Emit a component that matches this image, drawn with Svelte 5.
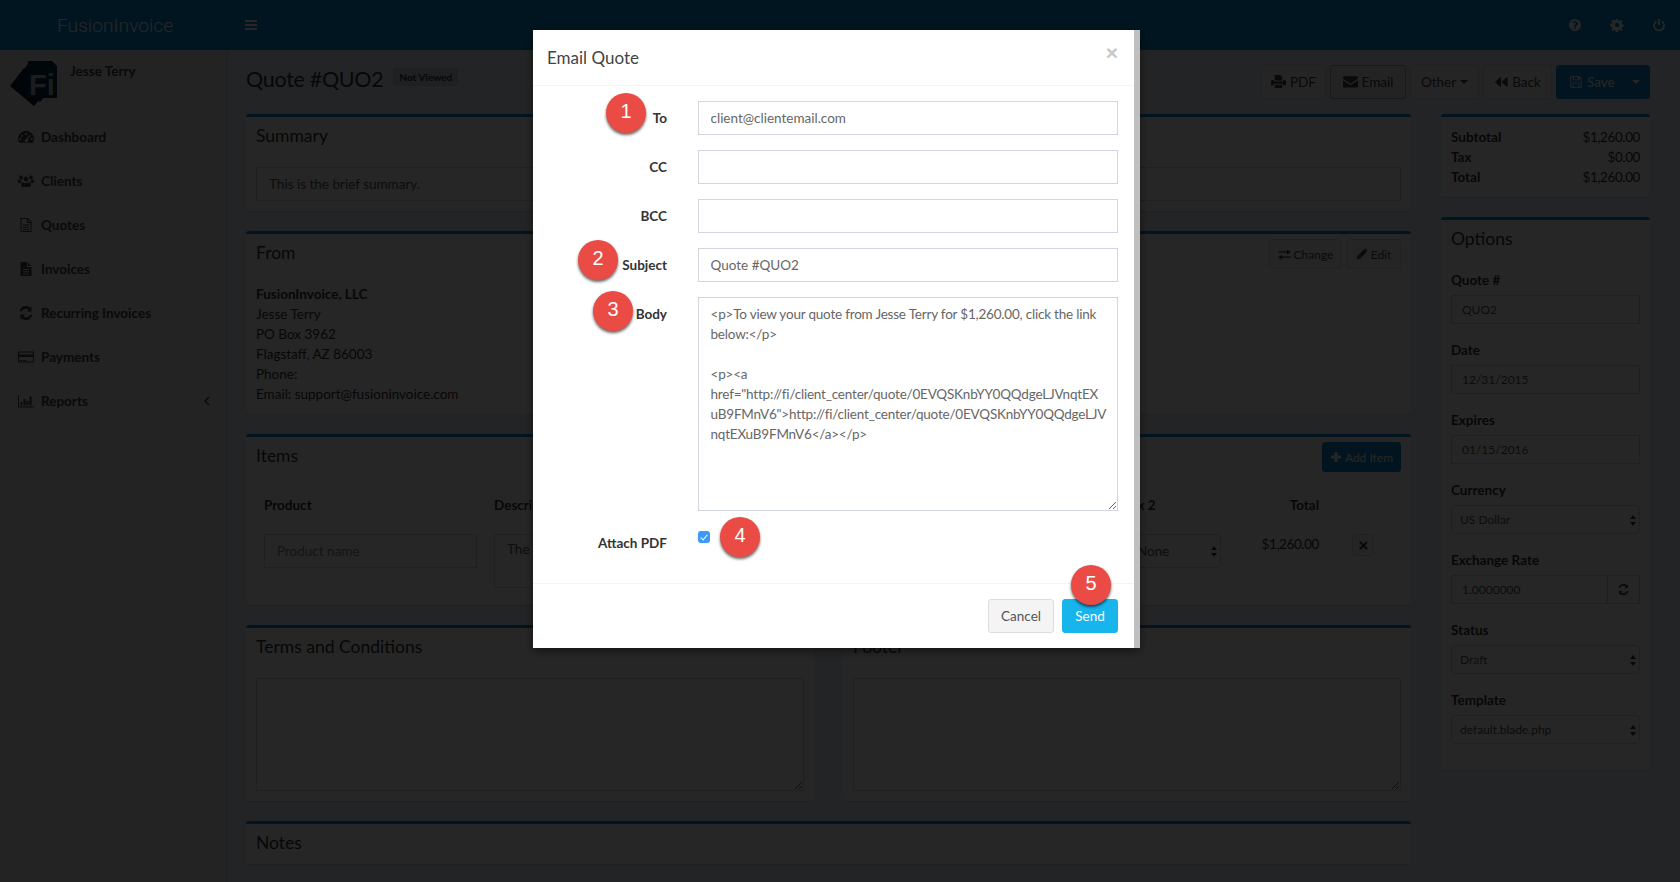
<script lang="ts">
	const icons: Record<string, string> = {
		dashboard: "M8 2a7.800 7.800 0 0 0-8 7.800c0 1.500.4 2.800 1.100 3.900h13.800c.7-1.100 1.100-2.400 1.100-3.900A7.800 7.800 0 0 0 8 2zM4 5.700a1.100 1.100 0 1 1 0 2.200 1.100 1.100 0 0 1 0-2.200zm4-1.700a1.100 1.100 0 1 1 0 2.200A1.100 1.100 0 0 1 8 4zm3.900 1.800.9.500-2.900 4.200a1.700 1.700 0 1 1-1.700-.6zM2.300 9a1.100 1.100 0 1 1 0 2.200 1.100 1.100 0 0 1 0-2.200zm11.400 0a1.100 1.100 0 1 1 0 2.200 1.100 1.100 0 0 1 0-2.200z",
		users: "M8 3.600a2.400 2.400 0 1 1 0 4.800 2.400 2.400 0 0 1 0-4.800zM3 2.600a1.900 1.900 0 1 1 0 3.800 1.900 1.900 0 0 1 0-3.800zm10 0a1.900 1.900 0 1 1 0 3.800 1.900 1.900 0 0 1 0-3.800zM4.200 8.900c.9.800 2.200 1 3.800 1s2.900-.2 3.800-1c.9.500 1.100 2 1.100 3.100 0 1.400-1 2-2.300 2H5.400c-1.300 0-2.300-.6-2.300-2 0-1.100.2-2.600 1.100-3.100zM0 7.500c0-.6.100-1.200.4-1.200.7.600 1.500.900 2.600.900l.9-.1c-.6.700-1.300 1.700-1.500 2.900H1.400C.6 10 0 9.500 0 8.500zm16 0v1c0 1-.6 1.500-1.400 1.500h-1.200c-.2-1.200-.9-2.200-1.500-2.900l.9.100c1.100 0 1.900-.3 2.600-.9.300 0 .6.600.6 1.200z",
		fileo: "M2.500 1h7.200L13.500 4.800V15h-11zM3.500 2v12h9V6H9V2zM10 2.500V5h2.500zM5 7.500h6v1H5zm0 2.300h6v1H5zm0 2.300h6v1H5z",
		file: "M2.500 1H9v5h4.500v9h-11zM10 1.200l3.300 3.800H10zM5 8v1h6V8zm0 2.300v1h6v-1zm0 2.300v1h6v-1z",
		refresh: "M13.600 1.800v4.700H8.900l1.800-1.800A4.400 4.400 0 0 0 3.800 6.300H1.700a6.500 6.500 0 0 1 10.500-3.900zM2.400 14.200V9.500h4.700l-1.800 1.800a4.400 4.400 0 0 0 6.900-1.600h2.100a6.500 6.500 0 0 1-10.500 3.900z",
		card: "M1.300 2.500h13.400c.7 0 1.300.6 1.300 1.300v8.400c0 .7-.6 1.300-1.300 1.300H1.300C.6 13.500 0 12.900 0 12.200V3.800c0-.7.600-1.300 1.300-1.300zM1 5.500h14V3.800a.3.3 0 0 0-.3-.3H1.300a.3.3 0 0 0-.3.300zm0 2.500v4.200c0 .2.100.3.300.3h13.400c.2 0 .3-.1.300-.3V8zm1 3h2v1H2zm3 0h3v1H5z",
		chart: "M0 2h1v11.500h15v1H0zM2.500 9h2v3.500h-2zm3-3h2v6.500h-2zm3 2h2v4.500h-2zm3-4.500h2v9h-2z",
		print: "M4 1h6l2 2v4H4zM1.500 6.500H3V8h10V6.500h1.500c.8 0 1.500.7 1.500 1.500v4h-3v-1.500H3V12H0V8c0-.8.7-1.500 1.500-1.500zM4 11.500h8V15H4z",
		envelope: "M0 4c0-.8.700-1.500 1.500-1.500h13c.8 0 1.500.7 1.500 1.500 0 .5-.4 1-1 1.500L9 9.700c-.6.400-1.400.400-2 0L1 5.500C.4 5 0 4.500 0 4zm0 2.700 6.300 4.300c1 .7 2.400.7 3.400 0L16 6.700v6.300c0 .8-.7 1.500-1.500 1.500h-13C.7 14.500 0 13.800 0 13z",
		backward: "M8 2v12L1 8zM15.500 2v12L8.500 8z",
		save: "M1.500 1.500h10.500l2.500 2.500v10.500h-13zM2.500 2.500v11h1.500V8.500h8v5h1.500V4.400l-1.500-1.500v3.100H4.500V2.500zM5.500 2.500V5h4.500V2.500zM5 9.500v4h6v-4z",
		exchange: "M0 4h11V2l5 3-5 3V5.600H0zM16 10.400H5V8.400l-5 3 5 3v-2.400h11z",
		pencil: "M1 15l1-4.500L10.500 2l3.500 3.500L5.500 14zM11.300 1.200c.5-.5 1.300-.5 1.800 0l1.700 1.700c.5.500.5 1.300 0 1.800l-.3.300-3.500-3.500z",
		plus: "M6 1.500h4v4.500h4.500v4H10v4.500H6V10H1.500V6H6z",
		times: "M3.800 1.800 8 6l4.200-4.200 2 2L10 8l4.200 4.200-2 2L8 10l-4.200 4.200-2-2L6 8 1.800 3.800z",
		question: "M8 1a7 7 0 1 1 0 14A7 7 0 0 1 8 1zM7 10.700v2h2v-2zM8 3.300c-1.500 0-2.700.7-3.300 1.800l1.400 1c.4-.6.900-1 1.700-1 .7 0 1.300.4 1.300 1 0 .5-.4.800-1 1.100-.8.400-1.100 1-1.100 1.800V10h2c0-.5.100-.7.600-1 .9-.6 1.800-1.200 1.800-2.900 0-1.700-1.600-2.800-3.400-2.800z",
		cog: "M6.800 1h2.400l.4 2 1.200.5 1.700-1.100 1.700 1.700-1.100 1.700.5 1.200 2 .4v2.400l-2 .4-.5 1.200 1.100 1.700-1.700 1.700-1.700-1.100-1.200.5-.4 2H6.800l-.4-2-1.200-.5-1.700 1.100-1.700-1.700 1.100-1.700-.5-1.200-2-.4V6.800l2-.4.5-1.200-1.100-1.700 1.700-1.700 1.700 1.100 1.200-.5zM8 5.500a2.500 2.500 0 1 0 0 5 2.500 2.500 0 0 0 0-5z",
		power: "M7 1h2v7H7zM4.600 2.800l1 1.700a4.700 4.700 0 1 0 4.800 0l1-1.700a6.700 6.700 0 1 1-6.800 0z",
	};

	const nav = [
		{ label: "Dashboard", icon: "dashboard" },
		{ label: "Clients", icon: "users" },
		{ label: "Quotes", icon: "fileo" },
		{ label: "Invoices", icon: "file" },
		{ label: "Recurring Invoices", icon: "refresh" },
		{ label: "Payments", icon: "card" },
		{ label: "Reports", icon: "chart" },
	];

	const totals = [
		["Subtotal", "$1,260.00"],
		["Tax", "$0.00"],
		["Total", "$1,260.00"],
	];

	const address = ["Jesse Terry", "PO Box 3962", "Flagstaff, AZ 86003", "Phone:", "Email: support@fusioninvoice.com"];

	const body = `<p>To view your quote from Jesse Terry for $1,260.00, click the link
below:</p>

<p><a
href="http://fi/client_center/quote/0EVQSKnbYY0QQdgeLJVnqtEX
uB9FMnV6">http://fi/client_center/quote/0EVQSKnbYY0QQdgeLJV
nqtEXuB9FMnV6</a></p>`;
</script>

{#snippet icon(name: string, size = 16)}
	<svg class="icon" width={size} height={size} viewBox="0 0 16 16" fill="currentColor" aria-hidden="true">
		<path d={icons[name]} fill-rule="evenodd" />
	</svg>
{/snippet}

{#snippet pickField(label: string, value: string)}
	<div class="side-field">
		<span class="side-label">{label}</span>
		<div class="select-wrap">
			<select class="select side-select"><option>{value}</option></select>
			<span class="updown"></span>
		</div>
	</div>
{/snippet}

{#snippet textField(label: string, value: string)}
	<div class="side-field">
		<span class="side-label">{label}</span>
		<input class="input side-input" {value} />
	</div>
{/snippet}

<div class="page">
	<header class="topbar">
		<div class="brand">FusionInvoice</div>
		<div class="burger"><span></span><span></span><span></span></div>
		<div class="top-icons">
			{@render icon("question", 14)}
			{@render icon("cog", 14)}
			{@render icon("power", 14)}
		</div>
	</header>

	<div class="shell">
		<aside class="sidebar">
			<div class="user">
				<svg class="logo" width="48" height="48" viewBox="0 0 48 48">
					<polygon points="0,26 14,8 38,30 24,46" fill="#011b2b" />
					<polygon points="5,22 18,4 42,28 30,42" fill="#012337" />
					<polygon points="18,1 42,1 47,6 47,38 16,38" fill="#022e4a" />
					<text x="19" y="35" class="logo-text">Fi</text>
				</svg>
				<span class="user-name">Jesse Terry</span>
			</div>
			<nav>
				{#each nav as item}
					<div class="nav-item">
						<span class="nav-icon">{@render icon(item.icon, 16)}</span>
						<span>{item.label}</span>
						{#if item.label === "Reports"}
							<svg class="chev" width="8" height="10" viewBox="0 0 8 10"><path d="M6 1 2 5l4 4" fill="none" stroke="currentColor" stroke-width="1.500" /></svg>
						{/if}
					</div>
				{/each}
			</nav>
		</aside>

		<main class="main">
			<div class="title-row">
				<h1>Quote #QUO2</h1>
				<span class="status">Not Viewed</span>
				<div class="toolbar">
					<button class="btn w65">{@render icon("print", 15)} PDF</button>
					<button class="btn w76 active">{@render icon("envelope", 15)} Email</button>
					<button class="btn w69">Other <span class="caret"></span></button>
					<button class="btn w69">{@render icon("backward", 14)} Back</button>
					<div class="btn primary save">
						<span class="save-label">{@render icon("save", 14)} Save</span>
						<span class="caret"></span>
					</div>
				</div>
			</div>

			<div class="columns">
				<div class="left-col">
					<section class="box">
						<div class="box-head"><h3>Summary</h3></div>
						<div class="box-body"><input class="input" value="This is the brief summary." /></div>
					</section>

					<section class="box">
						<div class="box-head">
							<h3>From</h3>
							<div class="head-actions">
								<button class="btn small w73">{@render icon("exchange", 13)} Change</button>
								<button class="btn small w55">{@render icon("pencil", 12)} Edit</button>
							</div>
						</div>
						<div class="box-body address">
							<strong>FusionInvoice, LLC</strong>
							{#each address as line}
								<div>{line}</div>
							{/each}
						</div>
					</section>

					<section class="box">
						<div class="box-head">
							<h3>Items</h3>
							<div class="head-actions"><button class="btn small primary add">{@render icon("plus", 12)} Add Item</button></div>
						</div>
						<div class="items">
							<strong>Product</strong>
							<strong>Description</strong>
							<strong>Tax 2</strong>
							<strong class="right">Total</strong>
							<span></span>
							<input class="input" placeholder="Product name" />
							<textarea class="input desc" readonly>The</textarea>
							<div class="select-wrap top">
								<select class="select tax"><option>None</option></select>
								<span class="updown"></span>
							</div>
							<span class="right amount">$1,260.00</span>
							<button class="del">{@render icon("times", 11)}</button>
						</div>
					</section>

					<div class="two-up">
						<section class="box">
							<div class="box-head"><h3>Terms and Conditions</h3></div>
							<div class="box-body"><textarea class="input notes" readonly></textarea></div>
						</section>
						<section class="box">
							<div class="box-head"><h3>Footer</h3></div>
							<div class="box-body"><textarea class="input notes" readonly></textarea></div>
						</section>
					</div>

					<section class="box">
						<div class="box-head"><h3>Notes</h3></div>
					</section>
				</div>

				<div class="right-col">
					<section class="box totals">
						{#each totals as row}
							<div class="total-row"><strong>{row[0]}</strong><span class="money">{row[1]}</span></div>
						{/each}
					</section>
					<section class="box options">
						<div class="box-head"><h3>Options</h3></div>
						{@render textField("Quote #", "QUO2")}
						{@render textField("Date", "12/31/2015")}
						{@render textField("Expires", "01/15/2016")}
						{@render pickField("Currency", "US Dollar")}
						<div class="side-field">
							<span class="side-label">Exchange Rate</span>
							<div class="rate">
								<input class="input side-input" value="1.0000000" />
								<span class="addon">{@render icon("refresh", 13)}</span>
							</div>
						</div>
						{@render pickField("Status", "Draft")}
						{@render pickField("Template", "default.blade.php")}
					</section>
				</div>
			</div>
		</main>
	</div>
</div>

<div class="backdrop">
	<div class="modal">
		<div class="modal-inner">
			<div class="modal-head">
				<h4>Email Quote</h4>
				<span class="close">×</span>
			</div>
			<form class="modal-body">
				<label for="m-to">To</label>
				<input id="m-to" class="m-input" value="client@clientemail.com" />
				<label for="m-cc">CC</label>
				<input id="m-cc" class="m-input" />
				<label for="m-bcc">BCC</label>
				<input id="m-bcc" class="m-input" />
				<label for="m-subject">Subject</label>
				<input id="m-subject" class="m-input" value="Quote #QUO2" />
				<label for="m-body">Body</label>
				<textarea id="m-body" class="m-input m-area" wrap="off" value={body}></textarea>
				<label for="m-pdf">Attach PDF</label>
				<div class="attach"><input id="m-pdf" type="checkbox" checked /></div>
			</form>
			<div class="modal-foot">
				<button class="m-btn cancel">Cancel</button>
				<button class="m-btn send">Send</button>
			</div>
		</div>
		<div class="modal-scroll"></div>

		<span class="pin p1">1</span>
		<span class="pin p2">2</span>
		<span class="pin p3">3</span>
		<span class="pin p4">4</span>
		<span class="pin p5">5</span>
	</div>
</div>

<style>
	:global(body) {
		margin: 0;
		font-family: Lato, "Noto Sans", sans-serif;
		font-size: 13.5px;
		color: #333;
		background: #ecf0f5;
		overflow: hidden;
	}

	.page {
		height: 882px;
		overflow: hidden;
	}

	.icon {
		display: inline-block;
		vertical-align: -2px;
	}

	h1,
	h3,
	h4 {
		margin: 0;
		font-weight: 400;
	}

	.topbar {
		height: 50px;
		background: #008cd6;
		display: flex;
		align-items: center;
		color: #fff;
	}

	.brand {
		width: 227px;
		padding-left: 57px;
		box-sizing: border-box;
		font-family: Roboto, sans-serif;
		font-weight: 300;
		font-size: 19.2px;
	}

	.burger {
		margin-left: 18px;
		width: 12px;
		display: flex;
		flex-direction: column;
		gap: 2px;
	}

	.burger span {
		height: 2px;
		background: #fff;
	}

	.top-icons {
		margin-left: auto;
		padding-right: 14px;
		display: flex;
		gap: 28px;
	}

	.shell {
		display: flex;
		height: 832px;
	}

	.sidebar {
		width: 227px;
		flex: none;
		background: #e8e8e8;
		border-right: 1px solid #d2d6de;
	}

	.user {
		height: 65px;
		display: flex;
		box-sizing: border-box;
		padding: 10px 0 0 10px;
	}

	.logo {
		flex: none;
	}

	.logo-text {
		font-family: "Liberation Sans", sans-serif;
		font-weight: 700;
		font-size: 29px;
		fill: #bbb;
	}

	.user-name {
		margin-left: 12px;
		margin-top: 3px;
		font-weight: 700;
		color: #444;
	}

	.nav-item {
		height: 44px;
		display: flex;
		align-items: center;
		padding-left: 18px;
		font-weight: 700;
		color: #444;
	}

	.nav-icon {
		width: 23px;
		display: flex;
	}

	.chev {
		margin-left: auto;
		margin-right: 16px;
	}

	.main {
		flex: 1;
		min-width: 0;
		padding: 15px 30px 0 18px;
	}

	.title-row {
		height: 33px;
		display: flex;
		align-items: center;
		margin-bottom: 16px;
	}

	h1 {
		font-size: 21.5px;
		letter-spacing: -0.3px;
		line-height: 26px;
		margin-top: -5px;
	}

	.status {
		margin-left: 10px;
		margin-bottom: 9px;
		background: #d2d6de;
		color: #333;
		font-size: 10px;
		font-weight: 700;
		padding: 3px 6px;
		border-radius: 3px;
		line-height: 12px;
	}

	.toolbar {
		margin-left: auto;
		display: flex;
		gap: 4px;
	}

	.btn {
		height: 34px;
		box-sizing: border-box;
		font: inherit;
		background: #f4f4f4;
		border: 1px solid #ddd;
		border-radius: 3px;
		color: #444;
		padding: 0;
		display: flex;
		align-items: center;
		justify-content: center;
		gap: 4px;
	}

	.w65 {
		width: 65px;
	}

	.w69 {
		width: 69px;
	}

	.w76 {
		width: 76px;
	}

	.w73 {
		width: 73px;
	}

	.w55 {
		width: 55px;
	}

	.btn.active {
		background: #e7e7e7;
		border-color: #adadad;
	}

	.btn.primary {
		background: #0c87cc;
		border-color: #0c87cc;
		color: #fff;
	}

	.save {
		width: 94px;
		justify-content: space-between;
		padding: 0 9px 0 12px;
	}

	.save-label {
		display: flex;
		align-items: center;
		gap: 4px;
	}

	.caret {
		display: inline-block;
		border-left: 4px solid transparent;
		border-right: 4px solid transparent;
		border-top: 4px solid currentColor;
	}

	.columns {
		display: flex;
		gap: 30px;
	}

	.left-col {
		width: 1165px;
		flex: none;
	}

	.right-col {
		flex: 1;
		min-width: 0;
	}

	.box {
		background: #fff;
		border-top: 3px solid #0c87cc;
		border-radius: 3px;
		margin-bottom: 20px;
		box-shadow: 0 1px 1px rgba(0, 0, 0, 0.1);
	}

	.box-head {
		height: 40px;
		box-sizing: border-box;
		padding: 0 10px;
		display: flex;
		align-items: center;
		justify-content: space-between;
	}

	h3 {
		font-size: 17.5px;
		line-height: 20px;
		margin-top: -3px;
	}

	.box-body {
		padding: 10px;
	}

	.input {
		display: block;
		width: 100%;
		height: 34px;
		box-sizing: border-box;
		border: 1px solid #d2d6de;
		background: #fff;
		font: inherit;
		color: #555;
		padding: 6px 12px;
		border-radius: 0;
		outline: none;
	}

	.input::placeholder {
		color: #888;
	}

	.head-actions {
		display: flex;
		gap: 4px;
	}

	.btn.small {
		height: 30px;
		font-size: 12px;
		padding: 0;
		gap: 3px;
	}

	.btn.add {
		width: 79px;
		height: 30px;
	}

	.address {
		line-height: 20px;
		height: 120px;
	}

	.address strong {
		display: block;
	}

	.items {
		display: grid;
		grid-template-columns: 213px 613px 97px 81px 65px;
		column-gap: 17px;
		padding: 20px 0 0 18px;
		height: 128px;
		box-sizing: border-box;
		align-content: start;
		grid-template-rows: 20px auto;
		row-gap: 17px;
	}

	.right {
		text-align: right;
	}

	.amount {
		line-height: 20px;
		letter-spacing: -0.4px;
	}

	.money {
		letter-spacing: -0.4px;
	}

	.desc {
		height: 54px;
		resize: none;
	}

	.del {
		width: 22px;
		height: 22px;
		margin-left: 16px;
		padding: 0;
		background: #f4f4f4;
		border: 1px solid #ddd;
		border-radius: 3px;
		color: #333;
		display: flex;
		align-items: center;
		justify-content: center;
	}

	.select-wrap {
		position: relative;
	}

	.select-wrap.top {
		align-self: start;
	}

	.select {
		appearance: none;
		display: block;
		width: 100%;
		box-sizing: border-box;
		background: #fff;
		border: 1px solid #d2d6de;
		border-radius: 4px;
		font: inherit;
		color: #555;
	}

	.tax {
		height: 34px;
		padding: 0 12px;
	}

	.updown {
		position: absolute;
		right: 7px;
		top: 50%;
		width: 0;
		height: 11px;
		margin-top: -5px;
	}

	.updown::before,
	.updown::after {
		content: "";
		position: absolute;
		left: -3px;
		border-left: 3px solid transparent;
		border-right: 3px solid transparent;
	}

	.updown::before {
		top: 0;
		border-bottom: 4px solid #333;
	}

	.updown::after {
		bottom: 0;
		border-top: 4px solid #333;
	}

	.two-up {
		display: flex;
		gap: 29px;
	}

	.two-up .box {
		flex: 1;
		min-width: 0;
	}

	.notes {
		height: 113px;
		resize: both;
	}

	.totals {
		padding: 10px;
		line-height: 20px;
	}

	.total-row {
		display: flex;
		justify-content: space-between;
	}

	.options {
		padding-bottom: 26px;
	}

	.side-field {
		padding: 0 10px;
		margin-bottom: 16px;
	}

	.side-field:last-child {
		margin-bottom: 0;
	}

	.box-head + .side-field {
		margin-top: 10px;
	}

	.side-label {
		display: block;
		font-weight: 700;
		line-height: 20px;
		margin-bottom: 5px;
	}

	.side-input {
		height: 29px;
		font-size: 12px;
		padding: 5px 10px;
	}

	.side-select {
		height: 29px;
		font-size: 12px;
		padding: 0 8px;
	}

	.rate {
		display: flex;
	}

	.addon {
		width: 32px;
		flex: none;
		height: 29px;
		box-sizing: border-box;
		border: 1px solid #d2d6de;
		border-left: 0;
		display: flex;
		align-items: center;
		justify-content: center;
		color: #555;
	}

	.backdrop {
		position: fixed;
		inset: 0;
		background: rgba(0, 0, 0, 0.85);
	}

	.modal {
		position: absolute;
		left: 533px;
		top: 30px;
		width: 607px;
		height: 618px;
		display: flex;
		box-shadow: 0 3px 9px rgba(0, 0, 0, 0.5);
	}

	.modal-inner {
		width: 601px;
		flex: none;
		background: #fff;
		display: flex;
		flex-direction: column;
	}

	.modal-scroll {
		flex: 1;
		background: #bfbfbf;
	}

	.modal-head {
		height: 56px;
		flex: none;
		box-sizing: border-box;
		border-bottom: 1px solid #f4f4f4;
		padding: 0 15px 0 14px;
		display: flex;
		align-items: center;
		justify-content: space-between;
	}

	h4 {
		font-size: 17px;
		color: #444;
	}

	.close {
		font-family: "Liberation Sans", sans-serif;
		font-size: 21px;
		font-weight: 700;
		color: #c8c8c8;
		margin-top: -10px;
		margin-right: 1px;
	}

	.modal-body {
		flex: 1;
		padding: 15px 16px 0 0;
		display: grid;
		grid-template-columns: 134px 1fr;
		column-gap: 31px;
		row-gap: 15px;
		align-content: start;
	}

	.modal-body label {
		text-align: right;
		font-weight: 700;
		line-height: 20px;
		padding-top: 7px;
		color: #333;
	}

	.m-input {
		display: block;
		width: 100%;
		height: 34px;
		box-sizing: border-box;
		border: 1px solid #d2d6de;
		padding: 6px 12px 6px 11.5px;
		font: inherit;
		color: #666;
		background: #fff;
		outline: none;
	}

	.m-area {
		height: 214px;
		line-height: 20px;
		overflow: hidden;
		resize: vertical;
		letter-spacing: -0.2px;
	}

	.attach {
		height: 34px;
	}

	.attach input {
		appearance: none;
		position: relative;
		display: block;
		width: 12px;
		height: 12px;
		margin: 5px 0 0;
		background: #3b99fc;
		border-radius: 3px;
	}

	.attach input::after {
		content: "";
		position: absolute;
		left: 4px;
		top: 1.500px;
		width: 3px;
		height: 6px;
		border: solid #fff;
		border-width: 0 1.500px 1.500px 0;
		transform: rotate(40deg);
	}

	.modal-foot {
		height: 65px;
		flex: none;
		box-sizing: border-box;
		border-top: 1px solid #f4f4f4;
		padding: 15px 16px 0 0;
		display: flex;
		justify-content: flex-end;
		gap: 8px;
	}

	.m-btn {
		height: 34px;
		box-sizing: border-box;
		font: inherit;
		border-radius: 3px;
		padding: 0;
	}

	.cancel {
		width: 66px;
		background: #f4f4f4;
		border: 1px solid #ddd;
		color: #555;
	}

	.send {
		width: 56px;
		background: #18b4ec;
		border: 1px solid #18b4ec;
		color: #fff;
	}

	.pin {
		position: absolute;
		width: 40px;
		height: 40px;
		border-radius: 50%;
		background: #ea4b45;
		box-shadow: 0 2px 3px rgba(0, 0, 0, 0.6);
		color: #fff;
		font-family: "Liberation Sans", sans-serif;
		font-size: 20px;
		line-height: 36px;
		text-align: center;
	}

	.p1 {
		left: 73px;
		top: 63px;
	}

	.p2 {
		left: 45px;
		top: 210px;
	}

	.p3 {
		left: 60px;
		top: 261px;
	}

	.p4 {
		left: 187px;
		top: 487px;
	}

	.p5 {
		left: 538px;
		top: 535px;
	}
</style>
